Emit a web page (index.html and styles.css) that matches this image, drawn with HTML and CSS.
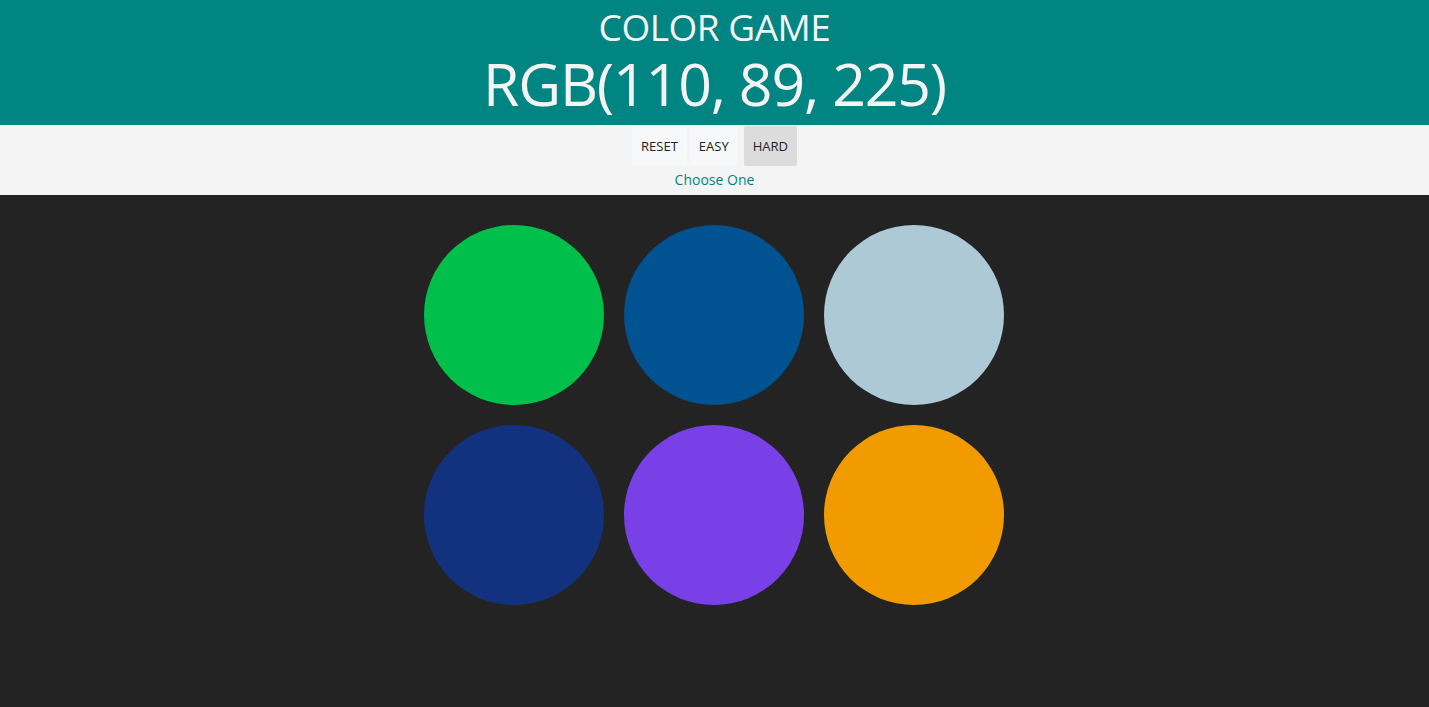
FILE: index.html
```html
<!DOCTYPE html>
<html>
<head>
<meta charset="utf-8">
<title>Color Game</title>
<link rel="stylesheet" href="styles.css">
</head>
<body>
<header class="header">
  <h1 class="title">COLOR GAME</h1>
  <div class="rgb">RGB(110, 89, 225)</div>
</header>
<nav class="bar">
  <div class="buttons">
    <button class="btn">RESET</button>
    <button class="btn">EASY</button>
    <button class="btn active">HARD</button>
  </div>
  <div class="message">Choose One</div>
</nav>
<main class="board">
  <div class="grid">
    <div class="square" style="background:#00bf4b"></div>
    <div class="square" style="background:#005290"></div>
    <div class="square" style="background:#adc9d6"></div>
    <div class="square" style="background:#12327f"></div>
    <div class="square" style="background:#7a40e8"></div>
    <div class="square" style="background:#f29b00"></div>
  </div>
</main>
</body>
</html>
```
FILE: styles.css
```css
html, body {
  margin: 0;
  padding: 0;
  height: 100%;
}
body {
  background: #232323;
  font-family: "Open Sans", "Noto Sans", sans-serif;
}
.header {
  background: #008582;
  color: #f4f4f4;
  text-align: center;
  height: 125px;
  display: flex;
  flex-direction: column;
  align-items: center;
}
.title {
  margin: 0;
  margin-top: 6px;
  font-weight: 400;
  font-size: 37px;
  line-height: 42px;
  letter-spacing: -0.5px;
}
.rgb {
  font-size: 59px;
  line-height: 70px;
  letter-spacing: -1.2px;
}
.bar {
  background: #f4f4f4;
  height: 70px;
  display: flex;
  flex-direction: column;
  align-items: center;
}
.buttons {
  display: flex;
  gap: 3px;
  margin-top: 1px;
}
.btn {
  border: none;
  background: #f7f8fa;
  color: #222;
  font-family: inherit;
  font-size: 13px;
  height: 40px;
  padding: 0 9px;
  border-radius: 2px;
}
.btn.active {
  background: #dcdcdc;
  margin-left: 3px;
}
.message {
  color: #008582;
  font-size: 14px;
  line-height: 18px;
  margin-top: 5px;
}
.board {
  display: flex;
  justify-content: center;
  padding-top: 20px;
  padding-right: 1px;
}
.grid {
  width: 600px;
  display: grid;
  grid-template-columns: repeat(3, 200px);
}
.square {
  width: 180px;
  height: 180px;
  margin: 10px;
  border-radius: 50%;
}
```
